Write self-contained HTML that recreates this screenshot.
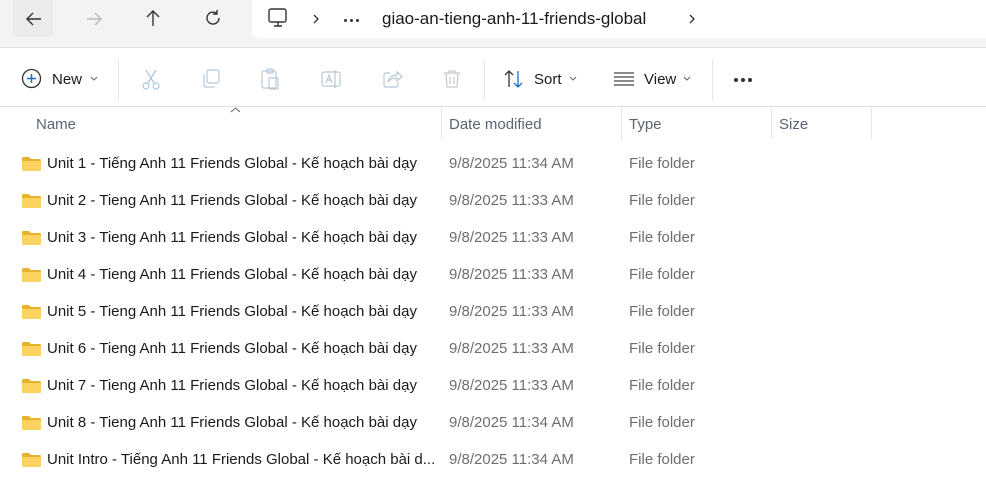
<!DOCTYPE html>
<html><head><meta charset="utf-8"><style>
*{margin:0;padding:0;box-sizing:border-box}
body{width:986px;height:497px;overflow:hidden;background:#fff;font-family:"Liberation Sans",sans-serif;position:relative;color:#1a1a1a}
.top{position:absolute;left:0;top:0;width:986px;height:48px;background:#f3f3f3;border-bottom:1px solid #e0e0e0}
.addr{position:absolute;left:252px;top:0;width:734px;height:38px;background:#fff;border-radius:0 0 0 6px}
.a{position:absolute;font-size:15px}
.ic{position:absolute}
.sep{position:absolute;width:1px;background:#e5e5e5}
.hdr{position:absolute;top:108px;height:32px;font-size:15px;color:#5a6470;line-height:34px}
.row{position:absolute;left:0;width:986px;height:37px;font-size:15px;line-height:37px}
.row span{position:absolute}
.g{color:#6e6e6e}
.f{position:absolute;left:22px;top:12px;width:19px;height:14px}
.dot{position:absolute;width:3px;height:3px;border-radius:50%;background:#333}
</style></head><body>
<div class="top"></div>
<div style="position:absolute;left:13px;top:0;width:40px;height:37px;background:#ebebeb;border-radius:0 0 4px 4px"></div>
<div class="addr"></div>
<svg class="ic" style="left:24px;top:9px" width="20" height="20" viewBox="0 0 20 20" fill="none" stroke="#333" stroke-width="1.4"><path d="M3 10H17M9 4L3 10L9 16"/></svg>
<svg class="ic" style="left:84px;top:9px" width="20" height="20" viewBox="0 0 20 20" fill="none" stroke="#bbb" stroke-width="1.4"><path d="M3 10H17M11 4L17 10L11 16"/></svg>
<svg class="ic" style="left:143px;top:8px" width="20" height="20" viewBox="0 0 20 20" fill="none" stroke="#333" stroke-width="1.4"><path d="M10 3V18M4 9L10 3L16 9"/></svg>
<svg class="ic" style="left:203px;top:8px" width="20" height="20" viewBox="0 0 20 20" fill="none" stroke="#333" stroke-width="1.4"><path d="M16 10A6 6 0 1 1 13.5 5.2M14 2V6H10"/></svg>
<svg class="ic" style="left:267px;top:7px" width="22" height="22" viewBox="0 0 22 22" fill="none" stroke="#333" stroke-width="1.4"><rect x="2" y="2" width="17" height="13" rx="2"/><path d="M7 19H15M11 15V19"/></svg>
<svg class="ic" style="left:312px;top:13px" width="8" height="12" viewBox="0 0 8 12" fill="none" stroke="#333" stroke-width="1.3"><path d="M2 2L6 6L2 10"/></svg>
<div class="dot" style="left:344px;top:19px"></div><div class="dot" style="left:350px;top:19px"></div><div class="dot" style="left:356px;top:19px"></div>
<div class="a" style="left:382px;top:9px;font-size:17px">giao-an-tieng-anh-11-friends-global</div>
<svg class="ic" style="left:688px;top:13px" width="8" height="12" viewBox="0 0 8 12" fill="none" stroke="#333" stroke-width="1.3"><path d="M2 2L6 6L2 10"/></svg>

<svg class="ic" style="left:21px;top:68px" width="21" height="21" viewBox="0 0 21 21" fill="none"><circle cx="10.5" cy="10.5" r="9" stroke="#333" stroke-width="1.3"/><path d="M10.5 6V15M6 10.5H15" stroke="#1a6fc4" stroke-width="1.5"/></svg>
<div class="a" style="left:52px;top:71px">New</div>
<svg class="ic" style="left:90px;top:76px" width="8" height="5" viewBox="0 0 8 5" fill="none" stroke="#666" stroke-width="1"><path d="M1 1L4 4L7 1"/></svg>
<div class="sep" style="left:118px;top:60px;height:40px"></div>
<svg class="ic" style="left:140px;top:68px" width="22" height="22" viewBox="0 0 22 22" fill="none" stroke="#a8c4e0" stroke-width="1.2"><path d="M6 2L14 15M16 2L8 15"/><circle cx="6" cy="18" r="3"/><circle cx="16" cy="18" r="3"/></svg>
<svg class="ic" style="left:200px;top:68px" width="22" height="22" viewBox="0 0 22 22" fill="none" stroke="#b8c8d8" stroke-width="1.2"><rect x="7" y="2" width="12" height="13" rx="2"/><path d="M4 6V17A2 2 0 0 0 6 19H15"/></svg>
<svg class="ic" style="left:259px;top:67px" width="22" height="24" viewBox="0 0 22 24" fill="none" stroke="#b8c8d8" stroke-width="1.2"><rect x="3" y="4" width="14" height="17" rx="2"/><rect x="8" y="2" width="6" height="4" rx="1"/><rect x="10" y="11" width="9" height="11" rx="1"/></svg>
<svg class="ic" style="left:320px;top:68px" width="22" height="22" viewBox="0 0 22 22" fill="none" stroke="#b8c8d8" stroke-width="1.2"><rect x="2" y="4" width="18" height="14" rx="2"/><path d="M6 15L9 7L12 15M7 12H11M15 2V20"/></svg>
<svg class="ic" style="left:381px;top:68px" width="22" height="22" viewBox="0 0 22 22" fill="none" stroke="#b8c8d8" stroke-width="1.2"><path d="M9 5H5A2 2 0 0 0 3 7V17A2 2 0 0 0 5 19H15A2 2 0 0 0 17 17V14M7 14C8 9 12 7 16 7V4L21 8.5L16 13V10C12 10 9 11 7 14Z"/></svg>
<svg class="ic" style="left:441px;top:68px" width="22" height="22" viewBox="0 0 22 22" fill="none" stroke="#c8c8c8" stroke-width="1.2"><path d="M3 5H19M8 5V3H14V5M5 5L6 19H16L17 5M9 9V16M13 9V16"/></svg>
<div class="sep" style="left:484px;top:60px;height:40px"></div>
<svg class="ic" style="left:503px;top:68px" width="22" height="22" viewBox="0 0 22 22" fill="none" stroke-width="1.3"><path d="M6 19V3M2 7L6 3L10 7" stroke="#333"/><path d="M15 3V19M11 15L15 19L19 15" stroke="#1a6fc4"/></svg>
<div class="a" style="left:534px;top:71px">Sort</div>
<svg class="ic" style="left:569px;top:76px" width="8" height="5" viewBox="0 0 8 5" fill="none" stroke="#666" stroke-width="1"><path d="M1 1L4 4L7 1"/></svg>
<svg class="ic" style="left:613px;top:70px" width="22" height="18" viewBox="0 0 22 18" fill="none" stroke="#444" stroke-width="1.2"><path d="M1 3H21M1 7H21M1 11H21M1 15H21"/></svg>
<div class="a" style="left:644px;top:71px">View</div>
<svg class="ic" style="left:683px;top:76px" width="8" height="5" viewBox="0 0 8 5" fill="none" stroke="#666" stroke-width="1"><path d="M1 1L4 4L7 1"/></svg>
<div class="sep" style="left:712px;top:60px;height:40px"></div>
<div class="dot" style="left:734px;top:78px;width:4px;height:4px"></div><div class="dot" style="left:741px;top:78px;width:4px;height:4px"></div><div class="dot" style="left:748px;top:78px;width:4px;height:4px"></div>
<div style="position:absolute;left:0;top:106px;width:986px;height:1px;background:#e0e0e0"></div>

<svg class="ic" style="left:230px;top:107px" width="11" height="6" viewBox="0 0 11 6" fill="none" stroke="#666" stroke-width="1"><path d="M1 5L5.5 1L10 5"/></svg>
<div class="hdr" style="left:36px">Name</div>
<div class="sep" style="left:441px;top:107px;height:32px"></div>
<div class="hdr" style="left:449px">Date modified</div>
<div class="sep" style="left:621px;top:107px;height:32px"></div>
<div class="hdr" style="left:629px">Type</div>
<div class="sep" style="left:771px;top:107px;height:32px"></div>
<div class="hdr" style="left:779px">Size</div>
<div class="sep" style="left:871px;top:107px;height:32px"></div>

<div id="rows"></div>
<script>
var names=["Unit 1 - Tiếng Anh 11 Friends Global - Kế hoạch bài dạy","Unit 2 - Tieng Anh 11 Friends Global - Kế hoạch bài dạy","Unit 3 - Tieng Anh 11 Friends Global - Kế hoạch bài dạy","Unit 4 - Tieng Anh 11 Friends Global - Kế hoạch bài dạy","Unit 5 - Tieng Anh 11 Friends Global - Kế hoạch bài dạy","Unit 6 - Tieng Anh 11 Friends Global - Kế hoạch bài dạy","Unit 7 - Tieng Anh 11 Friends Global - Kế hoạch bài dạy","Unit 8 - Tieng Anh 11 Friends Global - Kế hoạch bài dạy","Unit Intro - Tiếng Anh 11 Friends Global - Kế hoạch bài d..."];
var t=["11:34","11:33","11:33","11:33","11:33","11:33","11:33","11:34","11:34"];
var h="";
for(var i=0;i<9;i++){h+='<div class="row" style="top:'+(145+37*i)+'px"><svg class="f" viewBox="0 0 19 14"><path d="M0 1.5A1.5 1.5 0 0 1 1.5 0H7L9 2H17.5A1.5 1.5 0 0 1 19 3.5V12.5A1.5 1.5 0 0 1 17.5 14H1.5A1.5 1.5 0 0 1 0 12.5Z" fill="#e8b22e"/><path d="M0 4H19V12.5A1.5 1.5 0 0 1 17.5 14H1.5A1.5 1.5 0 0 1 0 12.5Z" fill="#fcd360"/></svg><span style="left:47px">'+names[i]+'</span><span class="g" style="left:449px">9/8/2025 '+t[i]+' AM</span><span class="g" style="left:629px">File folder</span></div>';}
document.getElementById("rows").innerHTML=h;
</script>
</body></html>
